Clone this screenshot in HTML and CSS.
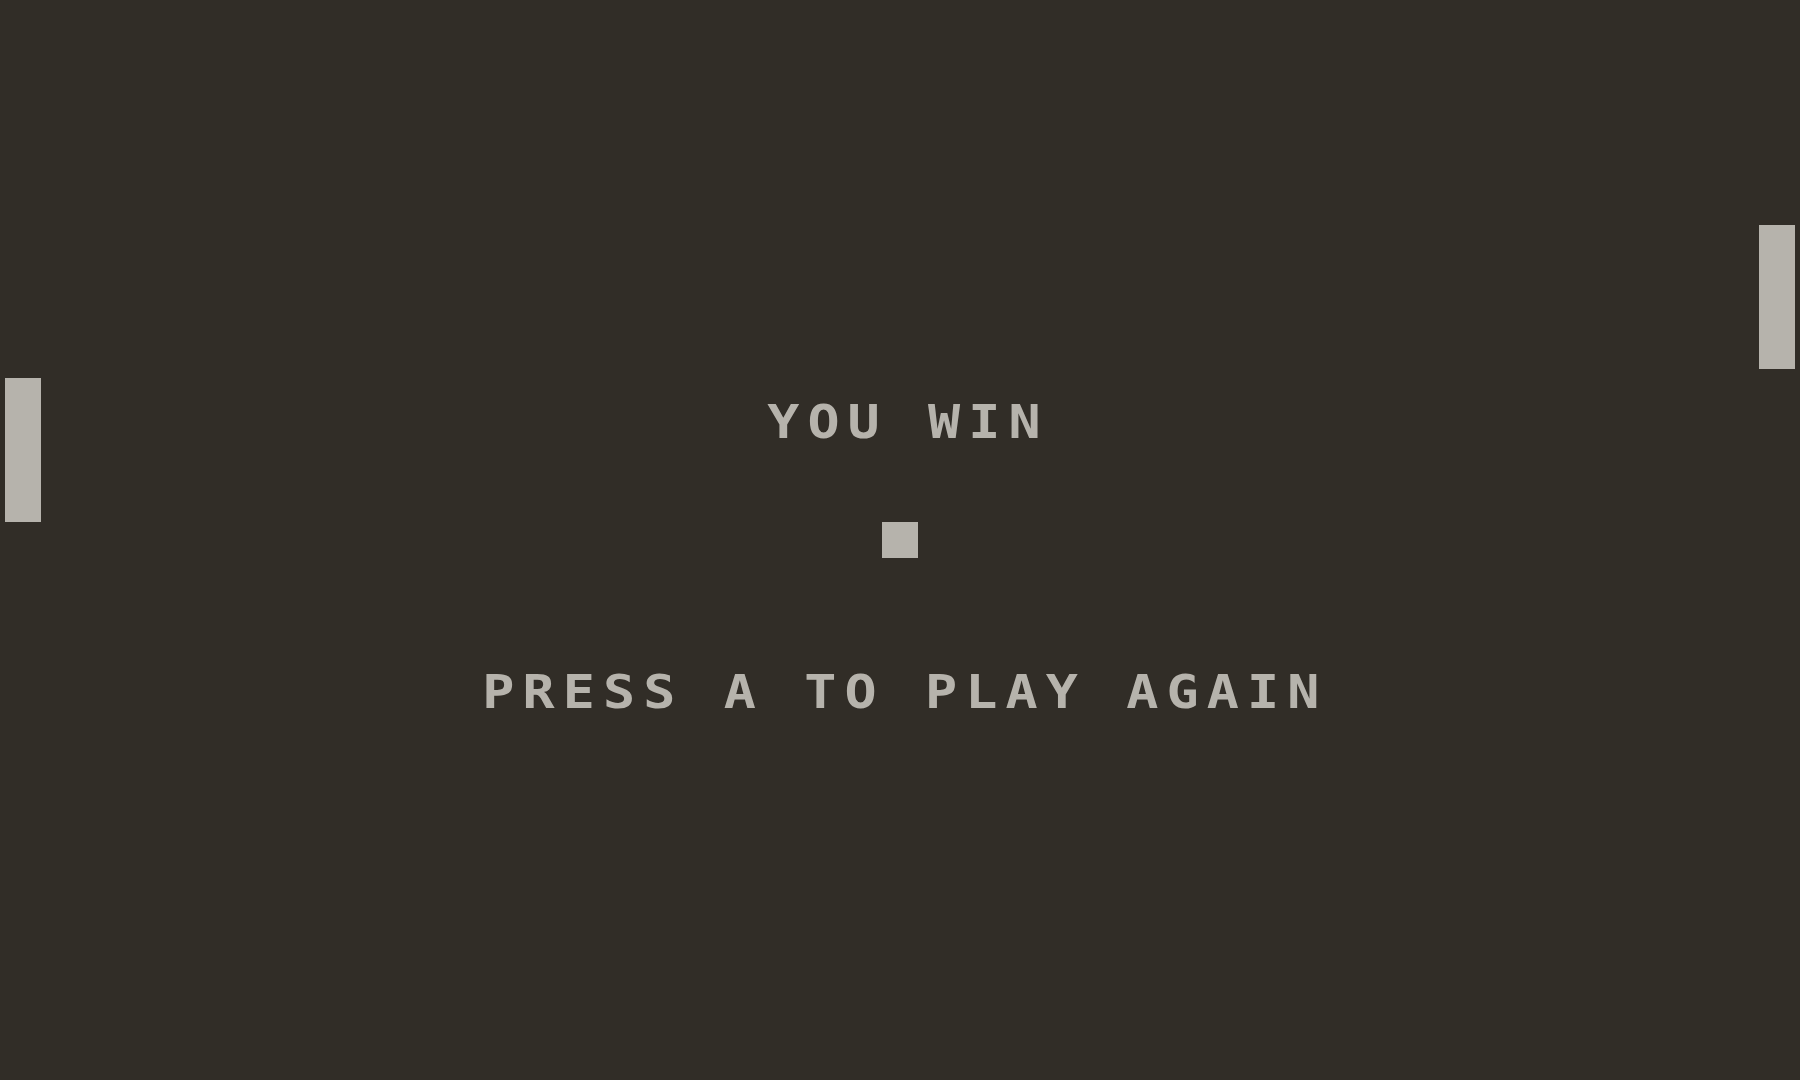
FILE: index.html
```html
<!DOCTYPE html>
<html lang="en">
<head>
  <meta charset="UTF-8" />
  <meta name="viewport" content="width=device-width, initial-scale=1.0" />
  <title>Pong</title>
  <link rel="stylesheet" href="styles.css">
</head>
<body>
  <div class="court">
    <div class="paddle paddle-left"></div>
    <div class="paddle paddle-right"></div>
    <div class="ball"></div>

    <div class="message">
      <p class="title">YOU WIN</p>
      <p class="hint">PRESS A TO PLAY AGAIN</p>
    </div>
  </div>
</body>
</html>
```

FILE: styles.css
```css
html, body {
  margin: 0;
  padding: 0;
  background: #312d27;
  overflow: hidden;
}
.court {
  position: relative;
  width: 1800px;
  height: 1080px;
  background: #312d27;
  color: #b6b3ac;
  font-family: "DejaVu Sans Mono", "Liberation Mono", monospace;
  font-weight: bold;
}
.paddle,
.ball {
  position: absolute;
  background: #b6b3ac;
  filter: blur(0.6px);
}
.paddle {
  width: 36px;
  height: 144px;
}
.paddle-left {
  left: 5px;
  top: 378px;
}
.paddle-right {
  left: 1759px;
  top: 225px;
}
.ball {
  width: 36px;
  height: 36px;
  left: 882px;
  top: 522px;
}
.message {
  display: flex;
  flex-direction: column;
  align-items: center;
  padding-top: 399px;
  gap: 224px;
}
/* blocky look: stretch the mono glyphs a little wider */
.message p {
  margin: 0;
  font-size: 46px;
  line-height: 46px;
  letter-spacing: 7px;
  padding-left: 7px;
  filter: blur(0.5px);
}
.title {
  transform: translateX(4px) scaleX(1.16);
}
.hint {
  transform: translateX(1px) scaleX(1.16);
}
```
